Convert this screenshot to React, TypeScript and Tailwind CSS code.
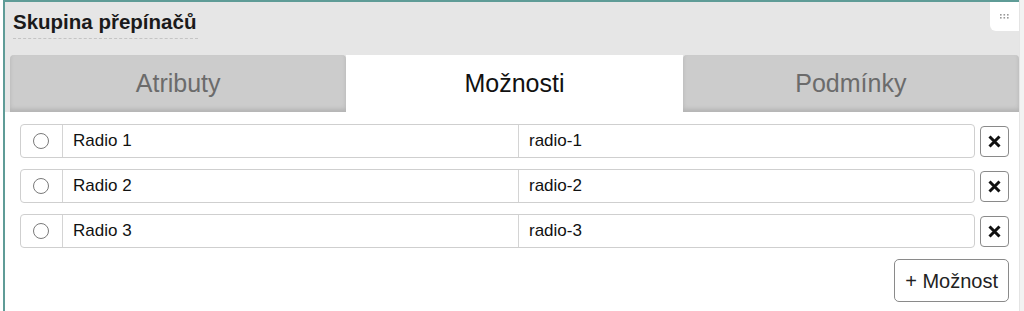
import React from "react";

const rows = [
  { label: "Radio 1", value: "radio-1" },
  { label: "Radio 2", value: "radio-2" },
  { label: "Radio 3", value: "radio-3" },
];

export default function App() {
  return (
    <div className="w-[1024px] h-[311px] overflow-hidden bg-white flex" style={{ fontFamily: '"Liberation Sans", Arial, sans-serif' }}>
      <div className="w-[3px] shrink-0" />
      <div className="w-[1016px] shrink-0 border-l-2 border-t-2 border-[#5f9c97] flex flex-col">
        <div className="bg-[#e6e6e6] flex flex-col">
          <div className="flex justify-between h-[31px]">
            <div className="pl-[8px] pt-[8px]">
              <span className="text-[20.5px] font-bold text-[#1a1a1a] leading-[24px] border-b border-dashed border-[#c4c4c4] pb-[4px] pr-[2px] inline-block">Skupina přepínačů</span>
            </div>
            <div className="w-[29px] h-[29px] bg-white rounded-bl-[6px] flex items-center justify-center">
              <svg width="9" height="5" viewBox="0 0 9 5">
                {[0, 3.5, 7].map((x) =>
                  [0, 3].map((y) => <rect key={`${x}-${y}`} x={x} y={y} width="1.6" height="1.6" fill="#999" />)
                )}
              </svg>
            </div>
          </div>
          <div className="flex pl-[5px] pt-[22px]">
            <div className="flex-1 h-[57px] bg-[#cccccc] rounded-t-[4px] flex items-center justify-center text-[25px] text-[#6b6b6b] shadow-[inset_0_-3px_4px_rgba(0,0,0,0.12)]">Atributy</div>
            <div className="flex-1 h-[57px] bg-white flex items-center justify-center text-[25px] text-[#111]">Možnosti</div>
            <div className="flex-1 h-[57px] bg-[#cccccc] rounded-t-[4px] flex items-center justify-center text-[25px] text-[#6b6b6b] shadow-[inset_0_-3px_4px_rgba(0,0,0,0.12)]">Podmínky</div>
          </div>
        </div>
        <div className="flex flex-col pl-[15px] pr-[10px] pt-[12px] gap-[11px]">
          {rows.map((r) => (
            <div key={r.value} className="flex items-center gap-[5px]">
              <div className="flex-1 h-[34px] border border-[#cfcfcf] rounded-[4px] flex text-[17px] text-[#111]">
                <div className="w-[42px] shrink-0 border-r border-[#d4d4d4] flex items-center pl-[12px]">
                  <div className="w-[16px] h-[16px] rounded-full border border-[#7a7a7a] bg-white" />
                </div>
                <div className="flex-1 flex items-center pl-[10px]">{r.label}</div>
                <div className="flex-1 flex items-center pl-[10px] border-l border-[#d4d4d4]">{r.value}</div>
              </div>
              <div className="w-[29px] h-[31px] border border-[#8a8a8a] rounded-[4px] flex items-center justify-center">
                <svg width="13" height="13" viewBox="0 0 13 13">
                  <path d="M1.5 1.5 L11.5 11.5 M11.5 1.5 L1.5 11.5" stroke="#111" strokeWidth="3" strokeLinecap="butt" />
                </svg>
              </div>
            </div>
          ))}
          <div className="flex justify-end">
            <div className="h-[43px] px-[10px] border border-[#8a8a8a] rounded-[5px] flex items-center text-[20px] text-[#222]">+ Možnost</div>
          </div>
        </div>
      </div>
      <div className="flex-1 bg-[#f2f2f2] border-l border-[#e4e4e4]" />
    </div>
  );
}
